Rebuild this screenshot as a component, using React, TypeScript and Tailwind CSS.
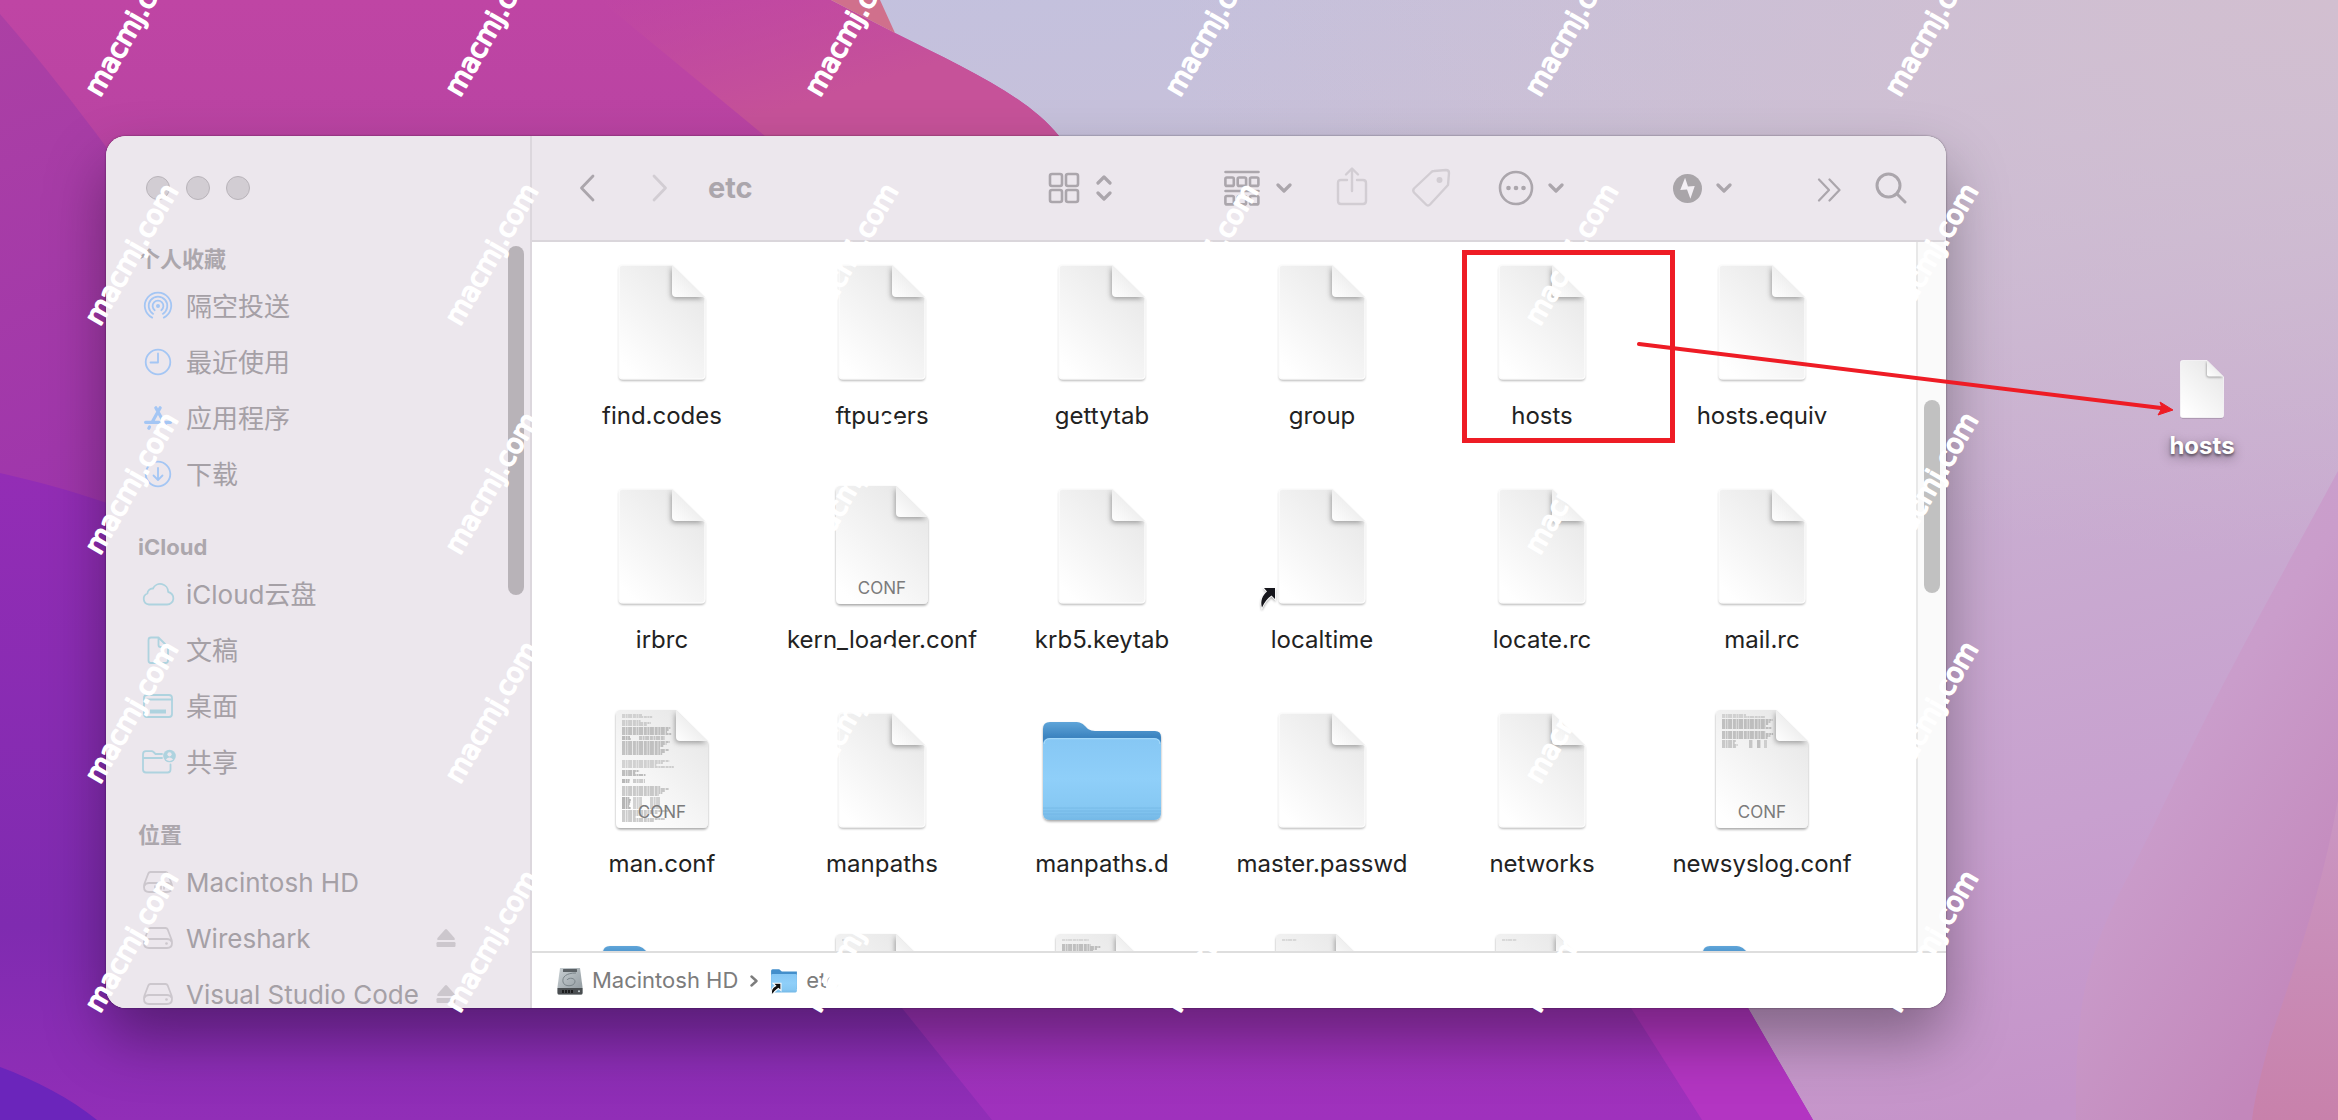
import React from 'react';

type FileKind = 'plain' | 'conf' | 'text' | 'folder' | 'alias';

interface FileEntry {
  name: string;
  kind: FileKind;
  tag?: string;
  preview?: 'full' | 'head' | 'line' | 'dense';
  marked?: boolean;
}

const FILES: FileEntry[] = [
  { name: 'find.codes', kind: 'plain' },
  { name: 'ftpusers', kind: 'plain' },
  { name: 'gettytab', kind: 'plain' },
  { name: 'group', kind: 'plain' },
  { name: 'hosts', kind: 'plain', marked: true },
  { name: 'hosts.equiv', kind: 'plain' },
  { name: 'irbrc', kind: 'plain' },
  { name: 'kern_loader.conf', kind: 'conf', tag: 'CONF' },
  { name: 'krb5.keytab', kind: 'plain' },
  { name: 'localtime', kind: 'alias' },
  { name: 'locate.rc', kind: 'plain' },
  { name: 'mail.rc', kind: 'plain' },
  { name: 'man.conf', kind: 'conf', tag: 'CONF', preview: 'full' },
  { name: 'manpaths', kind: 'plain' },
  { name: 'manpaths.d', kind: 'folder' },
  { name: 'master.passwd', kind: 'plain' },
  { name: 'networks', kind: 'plain' },
  { name: 'newsyslog.conf', kind: 'conf', tag: 'CONF', preview: 'head' },
  // last row is cut off by the path bar, only the icon tops show
  { name: '', kind: 'folder' },
  { name: '', kind: 'text', preview: 'line' },
  { name: '', kind: 'text', preview: 'dense' },
  { name: '', kind: 'text', preview: 'line' },
  { name: '', kind: 'text', preview: 'line' },
  { name: '', kind: 'folder' },
];

const BLUE = 'text-[#a4c6f4]';
const TEAL = 'text-[#aed3df]';
const GRAY = 'text-[#ccc7cd]';

/* ---------- wallpaper ---------- */

function Wallpaper() {
  return (
    <svg className="absolute inset-0 w-full h-full" viewBox="0 0 2338 1120" preserveAspectRatio="none" aria-hidden="true">
      <defs>
        <linearGradient id="sky" x1="0.35" y1="0" x2="0.85" y2="1">
          <stop offset="0" stopColor="#c3c1de" />
          <stop offset="0.25" stopColor="#c9c0d8" />
          <stop offset="0.5" stopColor="#c9b0d1" />
          <stop offset="0.8" stopColor="#c8a0cf" />
          <stop offset="1" stopColor="#c593c9" />
        </linearGradient>
        <radialGradient id="blush" cx="1" cy="0" r="0.5">
          <stop offset="0" stopColor="#d2bfd0" />
          <stop offset="1" stopColor="#d2bfd0" stopOpacity="0" />
        </radialGradient>
        <linearGradient id="magenta" x1="0" y1="0" x2="0" y2="1">
          <stop offset="0" stopColor="#bf45a4" />
          <stop offset="0.15" stopColor="#b843a2" />
          <stop offset="0.6" stopColor="#9a36ac" />
          <stop offset="1" stopColor="#9f31bd" />
        </linearGradient>
        <linearGradient id="left" x1="0" y1="0" x2="0.2" y2="1">
          <stop offset="0" stopColor="#ac40a4" />
          <stop offset="1" stopColor="#9c34ad" />
        </linearGradient>
        <linearGradient id="violet" x1="0" y1="0" x2="0" y2="1">
          <stop offset="0" stopColor="#932db5" />
          <stop offset="0.7" stopColor="#7f2bb0" />
          <stop offset="1" stopColor="#912eb7" />
        </linearGradient>
        <linearGradient id="pink" x1="0" y1="0" x2="1" y2="1">
          <stop offset="0" stopColor="#c64f9c" stopOpacity="0" />
          <stop offset="0.6" stopColor="#c65299" />
        </linearGradient>
        <linearGradient id="petal" x1="0" y1="0" x2="0.6" y2="1">
          <stop offset="0" stopColor="#cba4cf" />
          <stop offset="0.5" stopColor="#ca9dcb" />
          <stop offset="1" stopColor="#c387bb" />
        </linearGradient>
        <linearGradient id="petal2" x1="0.6" y1="0" x2="0.6" y2="1">
          <stop offset="0" stopColor="#ca97c3" />
          <stop offset="1" stopColor="#c881ab" />
        </linearGradient>
      </defs>
      <rect width="2338" height="1120" fill="url(#sky)" />
      <rect width="2338" height="1120" fill="url(#blush)" />
      <path d="M2338 471C2290 560 2240 650 2205 720C2165 800 2148 840 2123 886C2085 960 2075 1010 2076 1120H2338Z" fill="url(#petal)" />
      <path d="M2338 800C2320 900 2290 980 2270 1040C2262 1070 2255 1095 2252 1120H2338Z" fill="url(#petal2)" />
      <path d="M0 0H831L895 33C960 66 1025 94 1059 136L1200 500L1748 1008L1813 1120H0Z" fill="url(#magenta)" />
      <path d="M600 0H831L895 33C960 66 1025 94 1059 136H765Z" fill="url(#pink)" />
      <path d="M831 0H880L895 33Z" fill="#d0708c" />
      <path d="M1631 1008L1702 1120H1813L1748 1008L1700 900Z" fill="#b335c2" />
      <path d="M0 14C40 60 75 105 107 148L300 600H0Z" fill="url(#left)" />
      <path d="M0 473C40 482 75 492 107 503L700 700L902 1008L992 1120H0Z" fill="url(#violet)" />
      <path d="M0 1067C35 1080 70 1098 97 1120H0Z" fill="#6b25bb" />
    </svg>
  );
}

/* ---------- file icons ---------- */

/** Rows of the tiny unreadable text that a document thumbnail shows. */
function previewRows(kind: FileEntry['preview']) {
  const rows: { x: number; y: number; w: number; o: number }[] = [];
  const add = (from: number, to: number, min: number, max: number, o: number) => {
    for (let y = from; y < to; y += 2) {
      const w = min + ((y * 37) % 11) / 11 * (max - min);
      rows.push({ x: 24, y, w, o });
    }
  };
  if (kind === 'line') add(12, 13, 14, 16, 0.35);
  if (kind === 'dense') {
    add(12, 13, 26, 28, 0.35);
    add(17, 28, 26, 40, 0.7);
  }
  if (kind === 'head') {
    add(11, 14, 24, 50, 0.45);
    add(16, 26, 44, 52, 0.7);
    add(28, 36, 42, 52, 0.7);
    add(37, 45, 12, 16, 0.6);
    for (let y = 37; y < 45; y += 2) {
      rows.push({ x: 51, y, w: 4, o: 0.6 }, { x: 59, y, w: 4, o: 0.7 }, { x: 66, y, w: 3, o: 0.4 });
    }
  }
  if (kind === 'full') {
    add(11, 14, 20, 34, 0.45);
    add(17, 22, 16, 30, 0.5);
    add(24, 32, 44, 50, 0.7);
    add(33, 37, 8, 9, 0.8);
    add(38, 52, 38, 50, 0.7);
    add(57, 65, 30, 54, 0.5);
    add(67, 72, 12, 26, 0.8);
    add(76, 80, 7, 8, 0.9);
    add(83, 92, 36, 48, 0.65);
    add(94, 105, 7, 9, 0.95);
    add(107, 119, 10, 50, 0.65);
    for (let y = 33; y < 37; y += 2) rows.push({ x: 41, y, w: 26, o: 0.6 });
    for (let y = 76; y < 80; y += 2) rows.push({ x: 35, y, w: 12, o: 0.6 });
    for (let y = 94; y < 105; y += 2) rows.push({ x: 35, y, w: 9, o: 0.55 }, { x: 52, y, w: 10, o: 0.55 });
  }
  return rows;
}

function IconDefs() {
  return (
    <svg className="absolute w-0 h-0" aria-hidden="true">
      <defs>
        <linearGradient id="paper" x1="0.9" y1="0.1" x2="0.2" y2="1">
          <stop offset="0" stopColor="#e7e7e7" />
          <stop offset="1" stopColor="#ffffff" />
        </linearGradient>
        <linearGradient id="curl" x1="0" y1="1" x2="0.6" y2="0.4">
          <stop offset="0" stopColor="#ffffff" />
          <stop offset="1" stopColor="#ececec" />
        </linearGradient>
        <linearGradient id="folderBack" x1="0" y1="0" x2="0" y2="1">
          <stop offset="0" stopColor="#5fa5d9" />
          <stop offset="0.18" stopColor="#3c84c0" />
        </linearGradient>
        <linearGradient id="folderFront" x1="0" y1="0" x2="0" y2="1">
          <stop offset="0" stopColor="#86c7f4" />
          <stop offset="0.5" stopColor="#8fcff9" />
          <stop offset="0.85" stopColor="#86c8f3" />
          <stop offset="1" stopColor="#74b8e6" />
        </linearGradient>
        <linearGradient id="disk" x1="0" y1="0" x2="1" y2="1">
          <stop offset="0" stopColor="#c9d0d4" />
          <stop offset="1" stopColor="#8d969b" />
        </linearGradient>
        <filter id="soft" x="-40%" y="-40%" width="180%" height="180%">
          <feGaussianBlur stdDeviation="2.4" />
        </filter>
        <filter id="drop" x="-20%" y="-20%" width="140%" height="140%">
          <feDropShadow dx="0" dy="1.6" stdDeviation="1" floodColor="#000" floodOpacity="0.35" />
        </filter>
        <clipPath id="plainClip"><path d="M21 9H74L107 42V123H21Z" /></clipPath>
        <clipPath id="confClip"><path d="M18 6H78L110 38V124H18Z" /></clipPath>
      </defs>
    </svg>
  );
}

function AliasArrow() {
  return (
    <path
      d="M6 108H17V119L13.5 115.500C9.500 118.500 6.500 122 4 127.500C2 121 4.500 115.500 9 111.500Z"
      fill="#17171c" stroke="#fff" strokeWidth="1.200" paintOrder="stroke" filter="url(#drop)"
    />
  );
}

function FileIcon({ file, className }: { file: FileEntry; className: string }) {
  if (file.kind === 'folder') {
    return (
      <svg viewBox="0 0 128 128" className={className} aria-hidden="true">
        <g filter="url(#drop)">
          <path d="M5 25Q5 18 12 18H37C42 18 44 19 47 22L50 25Q53 27 57 27H117Q123 27 123 33V100H5Z" fill="url(#folderBack)" />
          <path d="M5 41Q5 34 12 34H116Q123 34 123 41V109Q123 116 116 116H12Q5 116 5 109Z" fill="url(#folderFront)" />
        </g>
        <path d="M6 40Q6.500 34.700 12 34.700H116Q121.500 34.700 122 40" fill="none" stroke="#a9dcfb" strokeWidth="1" />
        <path d="M5 104H123M5 107H123M5 110H123" stroke="#6fb4e3" strokeWidth="1" strokeOpacity="0.700" />
      </svg>
    );
  }
  const plain = file.kind === 'plain' || file.kind === 'alias';
  const body = plain
    ? 'M25 9H74L107 42V119Q107 123 103 123H25Q21 123 21 119V13Q21 9 25 9Z'
    : 'M23 6H78L110 38V119Q110 124 105 124H23Q18 124 18 119V11Q18 6 23 6Z';
  const curl = plain ? 'M74 9V37Q74 41 78 41H107Z' : 'M78 6V33Q78 37 82 37H110Z';
  return (
    <svg viewBox="0 0 128 128" className={className} aria-hidden="true">
      <path d={body} fill="url(#paper)" filter="url(#drop)" />
      {plain && <path d={body} fill="none" stroke="#fbfbfb" strokeWidth="1.500" />}
      {file.preview && previewRows(file.preview).map((r, i) => (
        <line
          key={i} x1={r.x} y1={r.y} x2={r.x + r.w} y2={r.y}
          stroke="#666" strokeWidth="1.200" strokeOpacity={r.o} strokeDasharray="3 0.600 2 0.500 4 0.800"
        />
      ))}
      <g clipPath={plain ? 'url(#plainClip)' : 'url(#confClip)'}>
        <path d={curl} fill="#000" fillOpacity="0.330" filter="url(#soft)" transform="translate(-1 2)" />
      </g>
      <path d={curl} fill="url(#curl)" />
      {file.tag && (
        <text x="64" y="114" textAnchor="middle" fontSize="17" fill="#7b7b7b" fontFamily="Inter, sans-serif">{file.tag}</text>
      )}
      {file.kind === 'alias' && <AliasArrow />}
    </svg>
  );
}

/* ---------- sidebar ---------- */

function SideIcon({ tone, children }: { tone: string; children: React.ReactNode }) {
  return (
    <span className={`w-10 flex justify-center shrink-0 ${tone}`}>
      <svg
        viewBox="0 0 36 32" className="w-9 h-8" fill="none" stroke="currentColor"
        strokeWidth="1.800" strokeLinecap="round" strokeLinejoin="round" aria-hidden="true"
      >
        {children}
      </svg>
    </span>
  );
}

const DRIVE = (
  <path d="M10.500 6H25.500Q27 6 27.700 7.500L31.500 17.500Q32 19 32 21Q32 26 27 26H9Q4 26 4 21Q4 19 4.500 17.500L8.300 7.500Q9 6 10.500 6ZM4.300 20Q5.500 17 9 17H27Q30.500 17 31.700 20" />
);

const ICONS = {
  airdrop: (
    <>
      <path d="M12.200 27.600A13.200 13.200 0 1 1 23.800 27.600M13.200 23.900A9.300 9.300 0 1 1 22.800 23.900M14.700 20.200A5.400 5.400 0 1 1 21.300 20.200" />
      <circle cx="18" cy="16" r="2" fill="currentColor" stroke="none" />
    </>
  ),
  recent: (
    <>
      <circle cx="18" cy="16" r="12.300" />
      <path d="M18 7.500V16.500H10.500" />
    </>
  ),
  apps: <path strokeWidth="3.200" d="M15.800 5.800L27 26M20.200 5.800L12.500 19.500M5.600 20.300H19M25.500 20.300H30.500M9.500 25L8.800 26.200" />,
  downloads: (
    <>
      <circle cx="18" cy="16" r="12.300" />
      <path d="M18 10V21.500M13.500 17.500L18 22L22.500 17.500" />
    </>
  ),
  cloud: <path d="M9 26.500H27A6.300 6.300 0 0 0 28.200 14A8 8 0 0 0 13 10.500A5.200 5.200 0 0 0 7.400 15.500A5.700 5.700 0 0 0 9 26.500Z" />,
  docs: <path d="M11 3.500H18.500L28 13V26.500Q28 29 25.500 29H11Q8.500 29 8.500 26.500V6Q8.500 3.500 11 3.500ZM18.500 3.500V11Q18.500 13 20.500 13H28" />,
  desktop: (
    <>
      <rect x="4" y="5" width="28" height="22" rx="3" />
      <path d="M4 9.500H32" />
      <path d="M10 21.500H26" strokeWidth="4" strokeLinecap="butt" />
    </>
  ),
  shared: (
    <>
      <path d="M22 8H15.500L13.500 6Q12.800 5.200 11.500 5.200H6Q3 5.200 3 8.500V23.500Q3 26.500 6 26.500H27.500Q30.500 26.500 30.500 23.500V18.500M3 12H22" />
      <circle cx="29.500" cy="10" r="6.300" fill="currentColor" stroke="none" />
      <circle cx="29.500" cy="8.300" r="2.100" fill="#ece7ed" stroke="none" />
      <path d="M25.800 13.600Q29.500 9.600 33.200 13.600Q29.500 16.400 25.800 13.600Z" fill="#ece7ed" stroke="none" />
    </>
  ),
  internal: (
    <>
      {DRIVE}
      <path d="M15 20V23M18 20V23M21 20V23M24 20V23" strokeWidth="1.500" />
    </>
  ),
  external: (
    <>
      {DRIVE}
      <circle cx="26.500" cy="21.500" r="1.300" fill="currentColor" stroke="none" />
    </>
  ),
};

interface SideItem { label: string; icon: keyof typeof ICONS; eject?: boolean }

const SECTIONS: { title: string; tone: string; items: SideItem[] }[] = [
  {
    title: '个人收藏', tone: BLUE,
    items: [
      { label: '隔空投送', icon: 'airdrop' },
      { label: '最近使用', icon: 'recent' },
      { label: '应用程序', icon: 'apps' },
      { label: '下载', icon: 'downloads' },
    ],
  },
  {
    title: 'iCloud', tone: TEAL,
    items: [
      { label: 'iCloud云盘', icon: 'cloud' },
      { label: '文稿', icon: 'docs' },
      { label: '桌面', icon: 'desktop' },
      { label: '共享', icon: 'shared' },
    ],
  },
  {
    title: '位置', tone: GRAY,
    items: [
      { label: 'Macintosh HD', icon: 'internal' },
      { label: 'Wireshark', icon: 'external', eject: true },
      { label: 'Visual Studio Code', icon: 'external', eject: true },
    ],
  },
];

function Sidebar() {
  return (
    <aside className="w-[426px] shrink-0 flex flex-col bg-[#ece7ed] border-r-2 border-[#dcd7dd]">
      <div className="h-[104px] shrink-0 flex items-center gap-4 pl-10">
        {['Close', 'Minimize', 'Zoom'].map((label) => (
          <button key={label} aria-label={label} className="size-6 rounded-full bg-[#d2cdd3] border border-[#b9b4ba]" />
        ))}
      </div>
      <div className="flex-1 min-h-0 flex overflow-hidden">
        <nav className="flex-1 min-w-0 pl-8 pr-[52px] flex flex-col gap-[26px]">
          {SECTIONS.map((section) => (
            <section key={section.title} className="shrink-0">
              <h2 className="h-[38px] flex items-center text-[22px] font-bold text-[#aca7ad]">{section.title}</h2>
              {section.items.map((item) => (
                <div key={item.label} className="h-14 flex items-center">
                  <a href="#" className="flex-1 flex items-center gap-2 text-[26px] text-[#a5a0a6] whitespace-nowrap">
                    <SideIcon tone={section.tone}>{ICONS[item.icon]}</SideIcon>
                    {item.label}
                  </a>
                  {item.eject && (
                    <button aria-label={`Eject ${item.label}`} className="text-[#ccc7cd]">
                      <svg viewBox="0 0 20 20" className="size-5" fill="currentColor" aria-hidden="true">
                        <path d="M9 1.500Q10 0.500 11 1.500L18.500 10Q19.500 12 17.500 12H2.500Q0.500 12 1.500 10Z" />
                        <rect x="0.500" y="14" width="19" height="5" rx="1.200" />
                      </svg>
                    </button>
                  )}
                </div>
              ))}
            </section>
          ))}
        </nav>
        <div className="w-[22px] shrink-0 pt-1.5">
          <div className="w-4 h-[349px] rounded-full bg-[#b8b3b8]" />
        </div>
      </div>
    </aside>
  );
}

/* ---------- toolbar ---------- */

function Glyph({ className, box, width = 2.6, children }: {
  className: string; box: string; width?: number; children: React.ReactNode;
}) {
  return (
    <svg
      viewBox={box} className={className} fill="none" stroke="currentColor" strokeWidth={width}
      strokeLinecap="round" strokeLinejoin="round" aria-hidden="true"
    >
      {children}
    </svg>
  );
}

function Down() {
  return <Glyph box="0 0 16 10" className="w-4 h-2.5" width={3.2}><path d="M2 2L8 8L14 2" /></Glyph>;
}

function Toolbar() {
  return (
    <header className="h-[106px] shrink-0 flex items-center bg-[#ece7ed] border-b-2 border-[#dad6db] pl-[47px] pr-[39px] text-[#aba6ac]">
      <button aria-label="Back">
        <Glyph box="0 0 16 28" className="w-4 h-7" width={2.8}><path d="M14 2L2.500 14L14 26" /></Glyph>
      </button>
      <button aria-label="Forward" className="ml-[57px] text-[#d2cdd3]">
        <Glyph box="0 0 16 28" className="w-4 h-7" width={2.8}><path d="M2 2L13.500 14L2 26" /></Glyph>
      </button>
      <h1 className="ml-10 text-[29px] font-bold">etc</h1>

      <button aria-label="View as icons" className="ml-auto flex items-center gap-4">
        <Glyph box="0 0 32 32" className="size-8">
          <rect x="2" y="2" width="12" height="12" rx="2" />
          <rect x="18" y="2" width="12" height="12" rx="2" />
          <rect x="2" y="18" width="12" height="12" rx="2" />
          <rect x="18" y="18" width="12" height="12" rx="2" />
        </Glyph>
        <Glyph box="0 0 16 28" className="w-4 h-7" width={3.2}><path d="M2 9L8 3L14 9M2 19L8 25L14 19" /></Glyph>
      </button>
      <button aria-label="Group" className="ml-28 flex items-center gap-4">
        <Glyph box="0 0 36 36" className="size-9">
          <path d="M1.500 2H34.500M1.500 21H34.500" />
          {[1.4, 13.7, 26].map((x) => (
            <React.Fragment key={x}>
              <rect x={x} y="7.500" width="8.400" height="8.400" rx="1.500" />
              <rect x={x} y="26" width="8.400" height="8.400" rx="1.500" />
            </React.Fragment>
          ))}
        </Glyph>
        <Down />
      </button>
      <button aria-label="Share" className="ml-11 text-[#d2cdd3]">
        <Glyph box="0 0 32 40" className="w-8 h-10 mb-1" width={2.4}>
          <path d="M11 14H5Q2 14 2 17V35Q2 38 5 38H27Q30 38 30 35V17Q30 14 27 14H21M16 25V3M10 8.500L16 2.500L22 8.500" />
        </Glyph>
      </button>
      <button aria-label="Tags" className="ml-[43px] text-[#d2cdd3]">
        <Glyph box="0 0 40 40" className="size-10" width={2.4}>
          <path d="M23 3L35 2Q38 2 38 5L37 17L19 36.500Q17 38.500 15 36.500L3 24.500Q1.500 22.500 3 20.500L20 4.500Q21 3 23 3Z" />
          <circle cx="28.500" cy="12" r="1.800" fill="currentColor" />
        </Glyph>
      </button>
      <button aria-label="More" className="ml-[47px] flex items-center gap-3.5">
        <Glyph box="0 0 36 36" className="size-9">
          <circle cx="18" cy="18" r="16" />
          <g fill="currentColor" stroke="none">
            <circle cx="10.500" cy="18" r="2.300" /><circle cx="18" cy="18" r="2.300" /><circle cx="25.500" cy="18" r="2.300" />
          </g>
        </Glyph>
        <Down />
      </button>
      <button aria-label="Quick actions" className="ml-[109px] flex items-center gap-3.5">
        <svg viewBox="0 0 30 30" className="size-[29px]" aria-hidden="true">
          <circle cx="15" cy="15" r="15" fill="#a9a5a9" />
          <path d="M12.500 4L7.500 16.500L14.500 16L18 25.500L22.500 12.500L15.500 13Z" fill="#f3eff4" />
        </svg>
        <Down />
      </button>
      <button aria-label="Show more" className="ml-[85px]">
        <Glyph box="0 0 24 24" className="size-6 mt-1" width={2.2}><path d="M2 1.500L12 12L2 22.500M12.500 1.500L22.500 12L12.500 22.500" /></Glyph>
      </button>
      <button aria-label="Search" className="ml-[34px]">
        <Glyph box="0 0 32 32" className="size-8" width={3}><circle cx="13.500" cy="13.500" r="11.500" /><path d="M22 22L30 30" /></Glyph>
      </button>
    </header>
  );
}

/* ---------- content ---------- */

function FileGrid() {
  return (
    <div className="flex-1 min-h-0 flex overflow-hidden">
      <div className="flex-1 min-w-0 grid grid-cols-[repeat(6,220px)] auto-rows-[224px] pt-3.5 pl-5 overflow-hidden">
        {FILES.map((file, i) => (
          <button key={i} className="relative flex flex-col items-center justify-start">
            <FileIcon file={file} className="size-32 shrink-0 overflow-visible" />
            <span className="mt-4 text-[24px] leading-8 text-[#222] whitespace-nowrap">{file.name}</span>
            {file.marked && (
              <span className="absolute z-10 left-[30px] -top-1.5 w-[213px] h-[193px] border-5 border-[#ee1c25]" />
            )}
          </button>
        ))}
      </div>
      <div className="w-[30px] shrink-0 bg-[#fafafa] border-l-2 border-[#e8e8e8] pl-1.5 pt-[158px]">
        <div className="w-4 h-[193px] rounded-full bg-[#c1c1c1]" />
      </div>
    </div>
  );
}

function PathBar() {
  return (
    <footer className="h-[57px] shrink-0 flex items-center border-t-2 border-[#dedede] pl-[25px] text-[22px] text-[#7c7c7c] bg-white">
      <svg viewBox="0 0 26 28" className="w-[26px] h-7" aria-hidden="true">
        <path d="M3 1H23L25.500 20V26Q25.500 27.500 24 27.500H2Q0.500 27.500 0.500 26V20Z" fill="url(#disk)" />
        <path d="M0.500 21H25.500V26Q25.500 27.500 24 27.500H2Q0.500 27.500 0.500 26Z" fill="#4a4e51" />
        <rect x="6" y="2" width="14" height="3" rx="0.500" fill="#5b6165" />
        <path d="M19 6C9 6 5 10 6 15C7 20 17 20 18 15C18.500 11 12 10 10 13" fill="none" stroke="#7b858a" strokeWidth="1" />
        <path d="M6 23V26M9 23V26M12 23V26M15 23V26" stroke="#111" strokeWidth="1.600" />
        <circle cx="22" cy="24.300" r="1" fill="#c6d0d4" />
      </svg>
      <a href="#" className="ml-[9px]">Macintosh HD</a>
      <Glyph box="0 0 8 12" className="w-2 h-3 mx-3" width={2.4}><path d="M1.500 1.500L6.500 6L1.500 10.500" /></Glyph>
      <svg viewBox="0 0 128 128" className="size-7 overflow-visible" aria-hidden="true">
        <path d="M5 17Q5 10 12 10H42L54 20H123V100H5Z" fill="#438fcb" />
        <path d="M5 36Q5 32 12 32H116Q123 32 123 38V109Q123 116 116 116H12Q5 116 5 109Z" fill="url(#folderFront)" />
        <path d="M14 74H50V108L38 98C26 106 18 114 10 128C0 108 10 94 26 86Z" fill="#111" stroke="#fff" strokeWidth="5" />
      </svg>
      <a href="#" className="ml-2">etc</a>
    </footer>
  );
}

/* ---------- overlays ---------- */

const MARK_X = [100, 460, 820, 1180, 1540, 1900];
const MARK_Y = [98, 327, 556, 785, 1014];

function Watermark() {
  return (
    <svg className="absolute inset-0 w-full h-full pointer-events-none" fill="#fff" stroke="#fff" aria-hidden="true">
      {MARK_Y.map((y) => MARK_X.map((x) => (
        <text
          key={`${x}-${y}`} transform={`translate(${x} ${y}) rotate(-60)`}
          fontSize="27" strokeWidth="1.800" strokeLinejoin="round" fontFamily="'DejaVu Sans', sans-serif"
        >
          macmj.com
        </text>
      )))}
    </svg>
  );
}

function Arrow() {
  return (
    <svg viewBox="0 0 540 76" className="absolute right-[163px] top-[341px] w-[540px] h-[76px]" aria-hidden="true">
      <path d="M4 3L526 67" stroke="#ee1c25" strokeWidth="4" strokeLinecap="round" />
      <path d="M538 69L525 61L527 67L523 74Z" fill="#ee1c25" stroke="#ee1c25" strokeLinejoin="round" />
    </svg>
  );
}

export default function App() {
  return (
    <div className="relative h-screen overflow-hidden flex pt-[136px] pb-28 pl-[106px] font-['Inter','Noto_Sans_CJK_SC',sans-serif]">
      <Wallpaper />
      <IconDefs />
      <main className="relative flex-1 min-w-0 flex rounded-[20px] overflow-hidden bg-white shadow-[0_0_2px_rgba(0,0,0,0.5),0_30px_60px_rgba(0,0,0,0.35)]">
        <Sidebar />
        <div className="flex-1 min-w-0 flex flex-col">
          <Toolbar />
          <FileGrid />
          <PathBar />
        </div>
      </main>
      <div className="relative w-[392px] shrink-0 flex justify-end items-start pt-[220px] pr-20">
        <button className="w-28 flex flex-col items-center">
          <FileIcon file={{ name: 'hosts', kind: 'plain' }} className="size-16 overflow-visible" />
          <span className="mt-2.5 text-[24px] leading-8 font-bold text-white [text-shadow:0_2px_3px_rgba(0,0,0,0.5),0_4px_12px_rgba(0,0,0,0.4)]">hosts</span>
        </button>
      </div>
      <Arrow />
      <Watermark />
    </div>
  );
}
